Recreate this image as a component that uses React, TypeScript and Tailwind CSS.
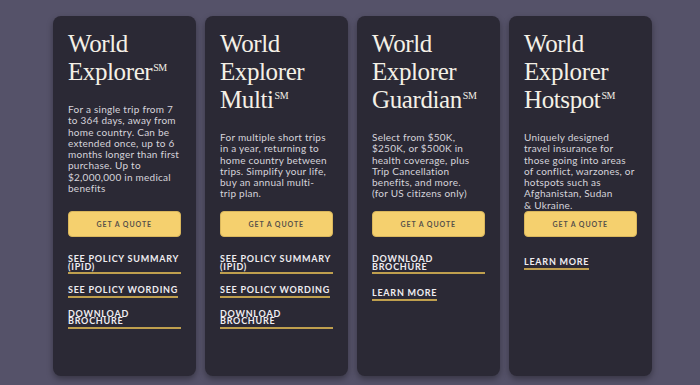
import React from "react";

type LinkDef = { lines: string[] };
type CardDef = { title: string[]; body: string[]; links: LinkDef[] };

const cards: CardDef[] = [
  {
    title: ["World", "Explorer"],
    body: [
      "For a single trip from 7",
      "to 364 days, away from",
      "home country. Can be",
      "extended once, up to 6",
      "months longer than first",
      "purchase. Up to",
      "$2,000,000 in medical",
      "benefits",
    ],
    links: [
      { lines: ["SEE POLICY SUMMARY", "(IPID)"] },
      { lines: ["SEE POLICY WORDING"] },
      { lines: ["DOWNLOAD", "BROCHURE"] },
    ],
  },
  {
    title: ["World", "Explorer", "Multi"],
    body: [
      "For multiple short trips",
      "in a year, returning to",
      "home country between",
      "trips. Simplify your life,",
      "buy an annual multi-",
      "trip plan.",
    ],
    links: [
      { lines: ["SEE POLICY SUMMARY", "(IPID)"] },
      { lines: ["SEE POLICY WORDING"] },
      { lines: ["DOWNLOAD", "BROCHURE"] },
    ],
  },
  {
    title: ["World", "Explorer", "Guardian"],
    body: [
      "Select from $50K,",
      "$250K, or $500K in",
      "health coverage, plus",
      "Trip Cancellation",
      "benefits, and more.",
      "(for US citizens only)",
    ],
    links: [{ lines: ["DOWNLOAD", "BROCHURE"] }, { lines: ["LEARN MORE"] }],
  },
  {
    title: ["World", "Explorer", "Hotspot"],
    body: [
      "Uniquely designed",
      "travel insurance for",
      "those going into areas",
      "of conflict, warzones, or",
      "hotspots such as",
      "Afghanistan, Sudan",
      "& Ukraine.",
    ],
    links: [{ lines: ["LEARN MORE"] }],
  },
];

const sans = "font-['Lato','Liberation_Sans',sans-serif]";

function Card({ c }: { c: CardDef }) {
  return (
    <div className="w-[142.5px] h-[360px] shrink-0 rounded-[8px] bg-[#2b2935] shadow-[0_3px_6px_rgba(0,0,0,0.35)] px-[15px] pt-[13.5px] flex flex-col">
      <div className="h-[181.5px]">
        <h2 className="font-['Liberation_Serif','Times_New_Roman',serif] text-[25px] leading-[28px] tracking-[-0.4px] text-[#f4f0e6] whitespace-nowrap">
          {c.title.map((t, i) => (
            <div key={i}>
              {t}
              {i === c.title.length - 1 && (
                <span className="text-[10px] tracking-[-0.5px] align-top relative top-[5px] ml-[1px] leading-none">SM</span>
              )}
            </div>
          ))}
        </h2>
        <div className={`${sans} mt-[18.5px] text-[10px] leading-[11.3px] tracking-[0.25px] text-[#d6d4db] whitespace-nowrap`}>
          {c.body.map((l, i) => (
            <div key={i}>{l}</div>
          ))}
        </div>
      </div>
      <button className={`${sans} h-[26px] w-full rounded-[4px] bg-[#f5d06e] border border-[#d9b65c] text-[7px] font-bold tracking-[0.9px] text-[#57504a]`}>
        GET A QUOTE
      </button>
      <div className="mt-[18px] flex flex-col items-start gap-[12px]">
        {c.links.map((l, i) => (
          <a
            key={i}
            className={`${sans} ${l.lines.length > 1 ? "self-stretch" : ""} ${l.lines[0] === "LEARN MORE" ? "mt-[3px]" : ""} block pb-[2px] border-b-2 border-[#bf9f4e] text-[9px] leading-[7.5px] font-bold tracking-[0.75px] text-[#efedf1] whitespace-nowrap`}
          >
            {l.lines.map((t, j) => (
              <div key={j}>{t}</div>
            ))}
          </a>
        ))}
      </div>
    </div>
  );
}

export default function App() {
  return (
    <div className="w-[700px] h-[385px] bg-[#555269] pt-[16px] pl-[53px] flex gap-[9.5px] overflow-hidden">
      {cards.map((c, i) => (
        <Card key={i} c={c} />
      ))}
    </div>
  );
}
